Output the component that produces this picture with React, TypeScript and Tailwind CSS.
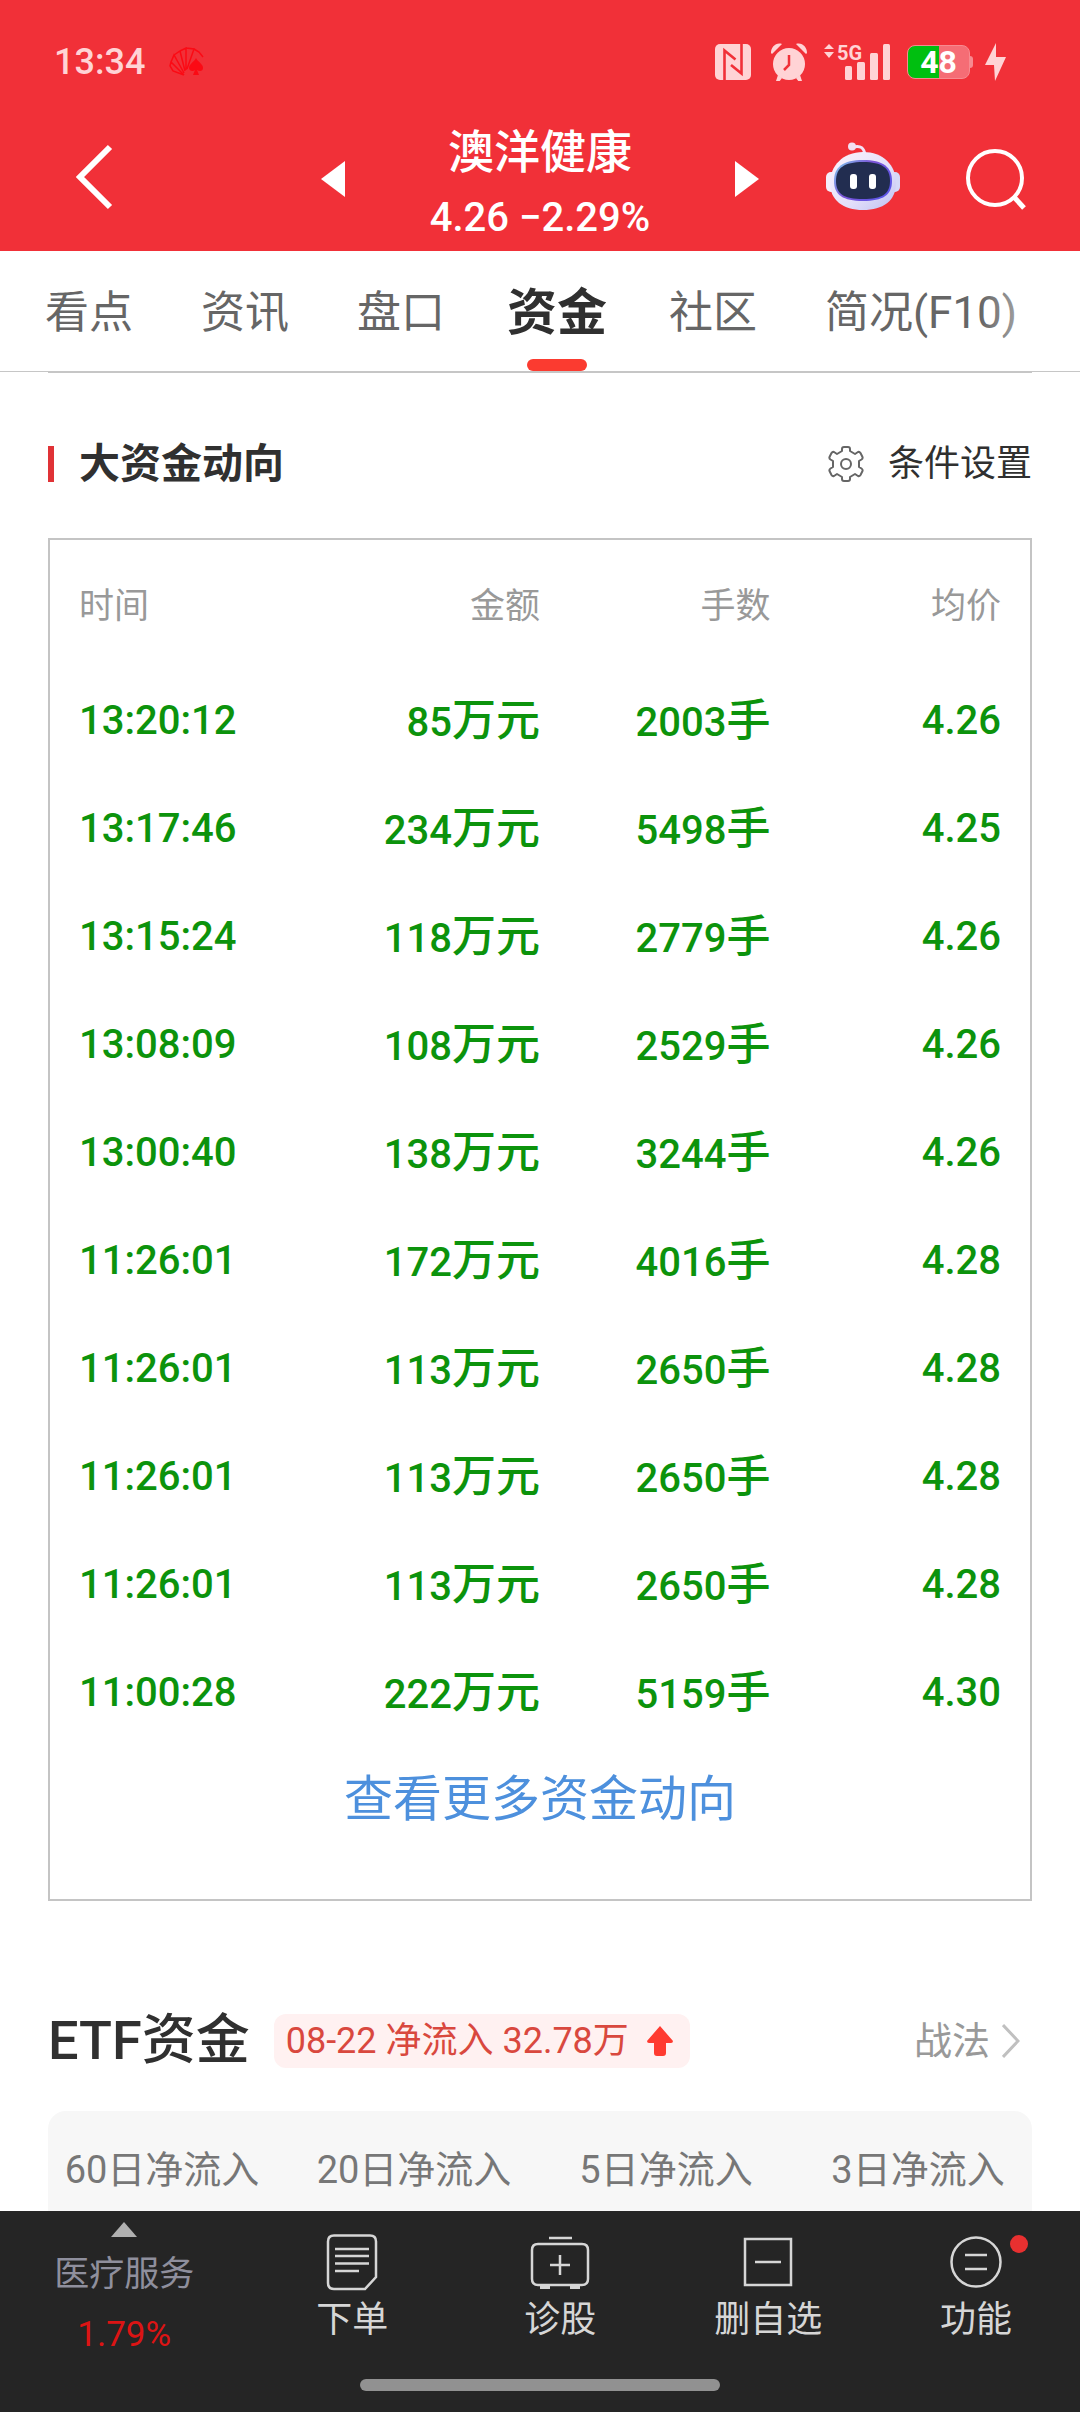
import type { ReactNode } from 'react';

const trades = [
  { time: '13:20:12', amount: '85', lots: '2003', price: '4.26' },
  { time: '13:17:46', amount: '234', lots: '5498', price: '4.25' },
  { time: '13:15:24', amount: '118', lots: '2779', price: '4.26' },
  { time: '13:08:09', amount: '108', lots: '2529', price: '4.26' },
  { time: '13:00:40', amount: '138', lots: '3244', price: '4.26' },
  { time: '11:26:01', amount: '172', lots: '4016', price: '4.28' },
  { time: '11:26:01', amount: '113', lots: '2650', price: '4.28' },
  { time: '11:26:01', amount: '113', lots: '2650', price: '4.28' },
  { time: '11:26:01', amount: '113', lots: '2650', price: '4.28' },
  { time: '11:00:28', amount: '222', lots: '5159', price: '4.30' },
];

const tabs = ['看点', '资讯', '盘口', '资金', '社区', '简况(F10)'];
const periods = ['60日净流入', '20日净流入', '5日净流入', '3日净流入'];

function StatusBar() {
  return (
    <div className="flex h-[124px] items-center justify-between pl-[54px] pr-[73px]">
      <div className="flex items-center gap-6 text-[#ffd3d5]">
        <span className="text-[36px] leading-none font-medium">13:34</span>
        <svg width="36" height="30" viewBox="0 0 36 30" fill="none" stroke="#fb0a14" strokeWidth="1.5">
          <path d="M15 28 4 24 1 19 2 15 15 28M2 15 5 8 15 26M5 8l6-4 5 20M11 4l6-3v22M17 1l8 1-7 20M25 2l5 3 4 5" />
          <path d="M27 11c-2 4-7 6-7 10 0 3 4 4 6 2l-2 5h6l-2-5c3 2 6 1 6-2 0-4-5-6-7-10Z" fill="#fb0a14" stroke="none" />
        </svg>
      </div>
      <div className="flex items-center text-[#ffd3d5]">
        <svg width="36" height="36" viewBox="0 0 36 36">
          <rect width="36" height="36" rx="5" fill="currentColor" />
          <path d="M9.500 36V6.500l11 9M26.500 0v29.500L16 21" fill="none" stroke="#f13038" strokeWidth="2.600" />
        </svg>
        <svg className="ml-5" width="36" height="38" viewBox="0 0 36 38" fill="currentColor">
          <circle cx="18" cy="21" r="16" />
          <path d="M0 10C0 4 5-1 11 1L1 11ZM36 10C36 4 31-1 25 1l10 10ZM7 32l4 3-3 4-3-1ZM29 32l-4 3 3 4 3-1Z" />
          <path d="M18 12v10l-5 5" fill="none" stroke="#f13038" strokeWidth="2.500" />
        </svg>
        <svg className="ml-4" width="68" height="50" viewBox="0 -6 68 50" fill="currentColor">
          <path d="m6 1 5 5H1ZM1 9h10l-5 6Z" />
          <text x="14" y="17" fontSize="20" fontWeight="700">
            5G
          </text>
          <rect x="22" y="23" width="7" height="14" rx="1.500" />
          <rect x="34" y="19" width="8" height="18" rx="1.500" />
          <rect x="47" y="10" width="8" height="27" rx="1.500" />
          <rect x="60" y="1" width="7" height="36" rx="1.500" />
        </svg>
        <div className="ml-4 flex items-center">
          <div className="flex h-[34px] w-[63px] items-center justify-center rounded-lg border border-[#f78a90] bg-linear-to-r from-[#00bf10] from-50% to-[#f56d75] to-50% text-[32px] leading-none font-bold text-white">
            48
          </div>
          <div className="h-3 w-[3px] rounded-r-sm bg-[#f78a90]" />
        </div>
        <svg className="ml-3" width="22" height="38" viewBox="0 0 22 38" fill="currentColor">
          <path d="M11 0 0 22h9l1 16L21 14h-10Z" />
        </svg>
      </div>
    </div>
  );
}

function Robot() {
  return (
    <svg width="74" height="68" viewBox="0 0 74 68">
      <defs>
        <linearGradient id="shell" x1="0" y1="0" x2="1" y2="1">
          <stop offset="0" stopColor="#fdf3fb" />
          <stop offset="0.6" stopColor="#e3dffa" />
          <stop offset="1" stopColor="#bdc0f2" />
        </linearGradient>
        <linearGradient id="rim" x1="0" y1="0" x2="1" y2="0.6">
          <stop offset="0" stopColor="#7fd0ee" />
          <stop offset="0.5" stopColor="#7d55d8" />
          <stop offset="1" stopColor="#5d55e6" />
        </linearGradient>
      </defs>
      <path d="M27 5c8-2 11 1 12 8" fill="none" stroke="#f3e2f6" strokeWidth="3" />
      <circle cx="26" cy="4.500" r="4" fill="#f3dff2" />
      <rect x="0" y="30" width="12" height="20" rx="5" fill="#f4eefb" />
      <rect x="62" y="30" width="12" height="20" rx="5" fill="#d5d8f8" />
      <path d="M37 10c20 0 33 13 33 31S57 68 37 68 4 58 4 41s13-31 33-31Z" fill="url(#shell)" />
      <path d="M37 18c20 0 29 7 29 21s-9 20-29 20S8 53 8 39s9-21 29-21Z" fill="url(#rim)" />
      <path d="M37 20c19 0 27 6 27 19s-8 18-27 18-27-5-27-18 8-19 27-19Z" fill="#222d50" />
      <rect x="24" y="32" width="7" height="15" rx="3" fill="#fff" />
      <rect x="43" y="32" width="7" height="15" rx="3" fill="#fff" />
    </svg>
  );
}

function StockHeader() {
  return (
    <div className="grid h-[127px] grid-cols-[1fr_218px_1fr] items-start">
      <div className="flex items-start justify-between pl-[76px] pr-[86px]">
        <button aria-label="返回" className="mt-5">
          <svg width="37" height="66" viewBox="0 0 37 66" fill="none" stroke="#fff" strokeWidth="6">
            <path d="M34 3 4 33l30 30" />
          </svg>
        </button>
        <button aria-label="上一只" className="mt-[37px]">
          <svg width="24" height="36" viewBox="0 0 24 36" fill="#fff">
            <path d="M24 0v36L0 18Z" />
          </svg>
        </button>
      </div>
      <div className="flex flex-col items-center pt-0.5 whitespace-nowrap text-white">
        <h1 className="text-[46px] leading-[52px] font-medium">澳洋健康</h1>
        <p className="mt-2 text-[40px] leading-[64px] font-medium">4.26 −2.29%</p>
      </div>
      <div className="flex items-start justify-between pl-[86px] pr-[52px]">
        <button aria-label="下一只" className="mt-[37px]">
          <svg width="24" height="36" viewBox="0 0 24 36" fill="#fff">
            <path d="M0 0v36l24-18Z" />
          </svg>
        </button>
        <button aria-label="智能助手" className="mt-[18px]">
          <Robot />
        </button>
        <button aria-label="搜索" className="mt-6">
          <svg width="62" height="62" viewBox="0 0 62 62" fill="none" stroke="#fff" strokeWidth="4">
            <circle cx="29" cy="30" r="27" />
            <path d="m48 49 10 11" strokeWidth="5" />
          </svg>
        </button>
      </div>
    </div>
  );
}

function TabBar() {
  return (
    <nav className="relative flex h-[121px] items-stretch gap-[68px] overflow-hidden border-b border-[#c6c6c6] pl-[45px] text-[44px] whitespace-nowrap text-[#666]">
      {tabs.map((tab) =>
        tab === '资金' ? (
          <button key={tab} className="relative -mx-1.5 pt-1 text-[50px] font-bold text-[#303030]">
            {tab}
            <span className="absolute bottom-0 left-1/2 h-3 w-[60px] -translate-x-1/2 rounded-full bg-[#fb3b30]" />
          </button>
        ) : (
          <button key={tab} className="pt-1">
            {tab}
          </button>
        ),
      )}
      <div className="pointer-events-none absolute inset-y-0 right-0 w-[100px] bg-linear-to-r from-transparent to-white" />
    </nav>
  );
}

function TradeTable() {
  return (
    <div className="mt-11 border-2 border-[#c4c4c4] px-[29px] pb-[67px]">
      <table className="w-full table-fixed">
        <thead>
          <tr className="h-[127px] text-right text-[35px] text-[#999]">
            <th className="w-[24%] pt-2 text-left font-normal">时间</th>
            <th className="w-[26%] pt-2 font-normal">金额</th>
            <th className="w-[25%] pt-2 font-normal">手数</th>
            <th className="w-[25%] pt-2 font-normal">均价</th>
          </tr>
        </thead>
        <tbody className="text-right text-[40px] font-medium text-[#0c930c]">
          {trades.map((row, i) => (
            <tr key={i} className="h-[108px]">
              <td className="text-left">{row.time}</td>
              <td>
                {row.amount}
                <span className="text-[44px]">万元</span>
              </td>
              <td>
                {row.lots}
                <span className="text-[44px]">手</span>
              </td>
              <td>{row.price}</td>
            </tr>
          ))}
        </tbody>
      </table>
      <a href="#more" className="block pt-[21px] text-center text-[49px] leading-[64px] text-[#4d90dd]">
        查看更多资金动向
      </a>
    </div>
  );
}

function BigMoney() {
  return (
    <section className="mx-12 border-t border-[#c6c6c6] pt-[61px]">
      <div className="flex h-[60px] items-center justify-between">
        <div className="flex items-center gap-[25px]">
          <span className="h-9 w-1.5 bg-[#e03236]" />
          <h2 className="text-[41px] leading-none font-bold text-[#303030]">大资金动向</h2>
        </div>
        <button className="flex items-center gap-6 text-[36px] leading-none text-[#303030]">
          <svg width="36" height="36" viewBox="0 0 36 36" fill="none" stroke="#666" strokeWidth="2" strokeLinejoin="round">
            <path d="M14 5V3q0-2 2-2h4q2 0 2 2v2l5 3 3-2q1.500-.5 2.500 1l2 4q.5 1.500-1 2.500L31 15v6l2.500 1.500q1.500 1 1 2.500l-2 4q-1 1.500-2.500 1l-3-2-5 3v2q0 2-2 2h-4q-2 0-2-2v-2l-5-3-3 2q-1.500.5-2.500-1l-2-4q-.5-1.500 1-2.500L5 21v-6l-2.500-1.500q-1.500-1-1-2.500l2-4q1-1.500 2.500-1l3 2Z" />
            <circle cx="18" cy="18" r="5" />
          </svg>
          条件设置
        </button>
      </div>
      <TradeTable />
    </section>
  );
}

function EtfFunds() {
  return (
    <section className="mx-12">
      <div className="mt-[100px] flex h-[80px] items-center">
        <h2 className="text-[54px] leading-none font-medium text-[#303030]">ETF资金</h2>
        <div className="ml-6 flex h-[54px] items-center gap-[18px] rounded-xl bg-[#fff1f1] pr-[17px] pl-3 text-[36px] leading-none whitespace-nowrap text-[#d9483e]">
          08-22 净流入 32.78万
          <svg width="26" height="30" viewBox="0 0 26 30" fill="#ff3b30">
            <path d="M13 0 26 15q0 2-2 2h-5v10q0 3-3 3h-6q-3 0-3-3V17H2q-2 0-2-2Z" />
          </svg>
        </div>
        <a href="#strategy" className="mr-3 ml-auto flex items-center gap-3 text-[38px] leading-none text-[#999]">
          战法
          <svg width="18" height="34" viewBox="0 0 18 34" fill="none" stroke="#c0c0c0" strokeWidth="3">
            <path d="m1 1 15 16L1 33" />
          </svg>
        </a>
      </div>
      <div className="mt-[30px] h-[100px] overflow-hidden rounded-t-[18px] bg-[#f7f7f7]">
        <div className="-mx-3 grid grid-cols-4 text-center text-[38px] leading-[118px] text-[#777]">
          {periods.map((p) => (
            <span key={p}>{p}</span>
          ))}
        </div>
      </div>
    </section>
  );
}

function NavItem({ label, dot, children }: { label: string; dot?: boolean; children: ReactNode }) {
  return (
    <button className="relative flex flex-1 flex-col items-center pt-[22px] text-[36px] leading-[40px] text-[#d6d6d6]">
      <svg width="60" height="58" viewBox="0 0 60 58" fill="none" stroke="currentColor" strokeWidth="2.500">
        {children}
      </svg>
      <span className="mt-[9px]">{label}</span>
      {dot && <span className="absolute top-6 right-[52px] h-[18px] w-[18px] rounded-full bg-[#e83030]" />}
    </button>
  );
}

function BottomBar() {
  return (
    <footer className="bg-[#252525] pb-[21px]">
      <div className="flex h-[168px]">
        <button className="flex w-[23%] flex-col items-center pt-[11px] text-[35px] leading-[40px]">
          <svg width="26" height="15" viewBox="0 0 26 15" fill="#b0b0b0">
            <path d="M13 0 26 15H0Z" />
          </svg>
          <span className="mt-[18px] text-[#8f8f9d]">医疗服务</span>
          <span className="mt-5 text-[#dc1414]">1.79%</span>
        </button>
        <NavItem label="下单">
          <path d="M12 2.500h36q6 0 6 6V44L43 56H12q-6 0-6-6V8.500q0-6 6-6ZM13 16h34M13 23h34M13 30.500h34M13 38h24" />
        </NavItem>
        <NavItem label="诊股">
          <path d="M19 5h23M8 11h44q6 0 6 6v29q0 6-6 6H8q-6 0-6-6V17q0-6 6-6ZM30 22v20M20 32h20" />
          <path d="M10 54h10M40 54h10" strokeWidth="4" />
        </NavItem>
        <NavItem label="删自选">
          <path d="M7 6h46v46H7ZM17 29h26" />
        </NavItem>
        <NavItem label="功能" dot>
          <circle cx="30" cy="29" r="24.500" />
          <path d="M19 22h22M19 36h22" />
        </NavItem>
      </div>
      <div className="mx-auto h-3 w-1/3 rounded-full bg-[#919191]" />
    </footer>
  );
}

export default function App() {
  return (
    <div className="min-h-screen bg-white font-[Roboto,'Noto_Sans_CJK_SC',sans-serif]">
      <header className="bg-[#f13038]">
        <StatusBar />
        <StockHeader />
      </header>
      <TabBar />
      <main>
        <BigMoney />
        <EtfFunds />
      </main>
      <BottomBar />
    </div>
  );
}
